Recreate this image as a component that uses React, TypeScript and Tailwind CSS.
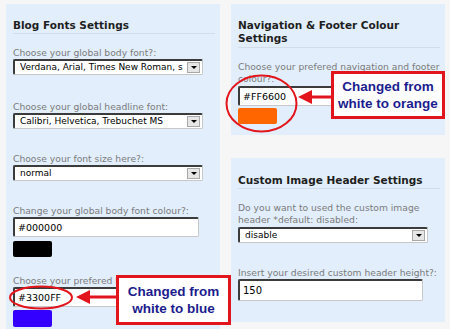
import React from 'react'

const labelCls = "text-[9.2px] leading-[12px] text-[#7b7b7b]";
const fieldBorder = "border-t-2 border-l-2 border-r border-b border-t-[#3b3b3b] border-l-[#3b3b3b] border-r-[#c8c8c8] border-b-[#c8c8c8] bg-white rounded-[2px]";

function Select({ value, mt }: { value: string, mt: string }) {
    return (
        <div className={`${fieldBorder} ${mt} w-[190px] h-[16px] flex items-center justify-between pl-[5px] pr-[2px]`}>
            <span className="text-[9px] leading-none text-black whitespace-nowrap overflow-hidden">{value}</span>
            <span className="w-[13px] h-[11px] border border-[#a8a8a8] bg-[#e6e6e6] flex items-center justify-center shrink-0">
                <span className="w-0 h-0 border-l-[3px] border-r-[3px] border-t-[3px] border-l-transparent border-r-transparent border-t-black"></span>
            </span>
        </div>
    );
}

function TextInput({ value, mt, w, h, size }: { value: string, mt: string, w: string, h: string, size: string }) {
    return (
        <div className={`${fieldBorder} ${mt} ${w} ${h} flex items-center pl-[3px]`}>
            <span className={`${size} leading-none text-black`}>{value}</span>
        </div>
    );
}

function Heading({ children, pb }: { children: React.ReactNode, pb: string }) {
    return (
        <div className={`text-[10.5px] leading-[13px] font-bold text-[#1e1e1e] border-b border-[#d2dde9] mr-[3px] ${pb}`}>
            {children}
        </div>
    );
}

function Callout({ className, lines }: { className: string, lines: string[] }) {
    return (
        <div className={`absolute bg-white border-[3px] border-[#e3151c] flex flex-col items-center justify-center whitespace-nowrap font-['Liberation_Sans',Arial,sans-serif] font-bold text-[13.5px] leading-[17px] text-[#1c1c8e] ${className}`}>
            {lines.map((l) => <span key={l}>{l}</span>)}
        </div>
    );
}

export default function App() {
    return (
        <div className="relative w-[450px] h-[329px] overflow-hidden bg-[#f6f6f6] font-['DejaVu_Sans',Verdana,sans-serif]">
            <div className="flex items-start pt-[4px] pl-[6px] gap-[11px]">
                <div className="w-[214px] h-[340px] bg-[#e2eefb] pl-[7px] pr-[2px] pt-[15px]">
                    <Heading pb="pb-[1px]">Blog Fonts Settings</Heading>
                    <div className={`${labelCls} mt-[13px]`}>Choose your global body font?:</div>
                    <Select value="Verdana, Arial, Times New Roman, s" mt="mt-0" />
                    <div className={`${labelCls} mt-[26px]`}>Choose your global headline font:</div>
                    <Select value="Calibri, Helvetica, Trebuchet MS" mt="mt-0" />
                    <div className={`${labelCls} mt-[24px]`}>Choose your font size here?:</div>
                    <Select value="normal" mt="mt-0" />
                    <div className={`${labelCls} mt-[24px]`}>Change your global body font colour?:</div>
                    <TextInput value="#000000" mt="mt-0" w="w-[186px]" h="h-[20px]" size="text-[9.5px]" />
                    <div className="mt-[4px] w-[39px] h-[16px] rounded-[2px] bg-black"></div>
                    <div className={`${labelCls} mt-[18px]`}>Choose your prefered link colour?:</div>
                    <TextInput value="#3300FF" mt="mt-0" w="w-[186px]" h="h-[20px]" size="text-[9.5px]" />
                    <div className="mt-[3px] w-[39px] h-[17px] rounded-[2px] bg-[#3300ff]"></div>
                </div>

                <div className="flex flex-col gap-[23px]">
                    <div className="w-[214px] h-[131px] bg-[#e2eefb] pl-[7px] pr-[2px] pt-[15px]">
                        <Heading pb="pb-[2px]">Navigation &amp; Footer Colour<br />Settings</Heading>
                        <div className={`${labelCls} mt-[13px]`}>Choose your prefered navigation and footer colour?:</div>
                        <TextInput value="#FF6600" mt="mt-[1px]" w="w-[185px]" h="h-[20px]" size="text-[9.5px]" />
                        <div className="mt-[2px] w-[39px] h-[16px] rounded-[2px] bg-[#ff6600]"></div>
                    </div>
                    <div className="w-[214px] h-[164px] bg-[#e2eefb] pl-[7px] pr-[2px] pt-[16px]">
                        <Heading pb="pb-[1px]">Custom Image Header Settings</Heading>
                        <div className={`${labelCls} mt-[13px] pr-[10px]`}>Do you want to used the custom image header *default: disabled:</div>
                        <Select value="disable" mt="mt-[1px]" />
                        <div className={`${labelCls} mt-[24px]`}>Insert your desired custom header height?:</div>
                        <TextInput value="150" mt="mt-0" w="w-[185px]" h="h-[22px]" size="text-[10px]" />
                    </div>
                </div>
            </div>

            {/* annotations */}
            <svg className="absolute left-0 top-0 pointer-events-none" width="450" height="329" viewBox="0 0 450 329">
                <ellipse cx="41" cy="297.5" rx="31" ry="11" fill="none" stroke="#e3151c" strokeWidth="2" />
                <line x1="116" y1="297" x2="88" y2="297" stroke="#e3151c" strokeWidth="3" />
                <polygon points="76,297 90,290 90,304" fill="#e3151c" />
                <ellipse cx="261.5" cy="103.5" rx="35" ry="28" fill="none" stroke="#e3151c" strokeWidth="2" />
                <line x1="331" y1="97" x2="310" y2="97" stroke="#e3151c" strokeWidth="3" />
                <polygon points="298,97 312,90 312,104" fill="#e3151c" />
            </svg>
            <Callout className="left-[116px] top-[275px] w-[115px] h-[50px]" lines={["Changed from", "white to blue"]} />
            <Callout className="left-[331px] top-[71px] w-[114px] h-[48px]" lines={["Changed from", "white to orange"]} />
        </div>
    )
}
